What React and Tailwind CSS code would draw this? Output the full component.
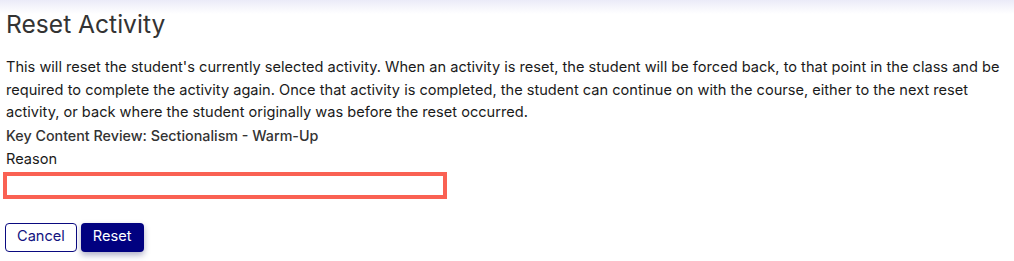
export default function App() {
  return (
    <div
      className="w-[1014px] h-[261px] bg-[linear-gradient(to_bottom,#ebebf8_0px,#ffffff_14px)] text-[#1f1f1f] overflow-hidden"
      style={{ fontFamily: "Inter, 'Noto Sans', sans-serif" }}
    >
      <div className="pt-[10px] pl-[6px] pr-[6px]">
        <h1 className="text-[24.6px] leading-[29px] text-[#333333] font-normal">Reset Activity</h1>
        <p className="mt-[17px] text-[14.6px] leading-[22.5px] text-[#1a1a1a]">
          This will reset the student's currently selected activity. When an activity is reset, the student will be forced back, to that point in the class and be required to complete the activity again. Once that activity is completed, the student can continue on with the course, either to the next reset activity, or back where the student originally was before the reset occurred.
        </p>
        <div className="mt-[1px] text-[14.3px] leading-[22.5px] font-medium text-[#333333]">
          Key Content Review: Sectionalism - Warm-Up
        </div>
        <div className="mt-[1px] text-[14.6px] leading-[22.5px] text-[#1a1a1a]">Reason</div>
      </div>
      <div className="pl-[3px] mt-[1px]">
        <input
          type="text"
          className="block w-[444px] h-[27px] border-[4px] border-[#fa6153] bg-white outline-none"
        />
      </div>
      <div className="flex gap-[4px] pl-[5px] mt-[24px]">
        <button className="h-[29px] px-[11px] rounded-[4px] border border-[#0a0a80] text-[#12127f] text-[14.6px] bg-white">
          Cancel
        </button>
        <button className="h-[29px] px-[12px] rounded-[4px] bg-[#010180] text-white text-[14.6px] shadow-[0_3px_6px_rgba(20,20,90,0.35)]">
          Reset
        </button>
      </div>
    </div>
  );
}
